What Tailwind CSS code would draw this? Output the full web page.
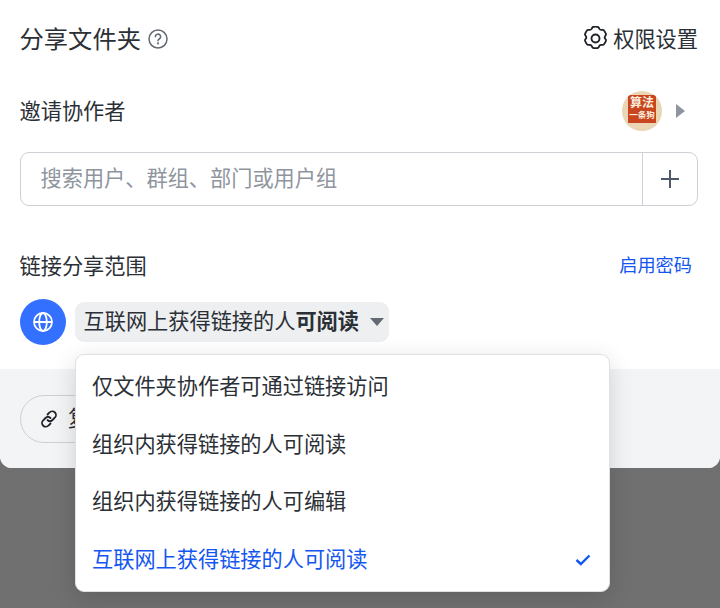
<!DOCTYPE html>
<html lang="zh-CN">
<head>
  <meta charset="UTF-8" />
  <title>分享文件夹</title>
  <script src="https://cdn.jsdelivr.net/npm/@tailwindcss/browser@4"></script>
</head>
<body class="bg-[#707070] text-[#2b2f36] font-['Inter','Noto_Sans_CJK_SC',sans-serif]">
  <div class="relative w-[720px] h-[608px] overflow-hidden">

    <!-- Card -->
    <div class="bg-white rounded-b-[12px] overflow-hidden w-[720px] h-[468px] flex flex-col">
      <div class="h-[369px] pl-[19.5px] pr-[22px] pt-[20.5px]">
        <!-- Header -->
        <div class="flex items-center justify-between h-9">
          <div class="flex items-center gap-[6px]">
            <h1 class="text-[24.3px] leading-9">分享文件夹</h1>
            <svg class="w-[22px] h-[22px] text-[#646a73]" viewBox="0 0 22 22" fill="none" stroke="currentColor" stroke-width="1.5" stroke-linecap="round">
              <circle cx="11" cy="11" r="9"/>
              <path d="M8.4 8.8a2.6 2.6 0 1 1 3.9 2.2c-.9.5-1.3 1-1.3 1.8"/>
              <circle cx="11" cy="15.4" r=".4" fill="currentColor"/>
            </svg>
          </div>
          <div class="flex items-center gap-[5px]">
            <svg class="w-[25px] h-[25px]" viewBox="2 2 20 20" fill="none" stroke="#1f2329" stroke-width="1.5" stroke-linejoin="round">
              <path d="M9.5 3.2a2 2 0 0 1 1-.6 6 6 0 0 1 3 0c.4.1.8.3 1 .6l.6 1.1c.3.5.9.8 1.5.8l1.2 0c.4 0 .8.2 1 .5a9 9 0 0 1 1.5 2.6c.1.4.1.8-.1 1.1l-.6 1c-.3.5-.3 1.1 0 1.6l.6 1c.2.3.2.7.1 1.1a9 9 0 0 1-1.5 2.6c-.2.3-.6.5-1 .5l-1.2 0c-.6 0-1.2.3-1.5.8l-.6 1.1c-.2.3-.6.5-1 .6a8 8 0 0 1-3 0c-.4-.1-.8-.3-1-.6l-.6-1.1c-.3-.5-.9-.8-1.5-.8l-1.2 0c-.4 0-.8-.2-1-.5a9 9 0 0 1-1.5-2.6c-.1-.4-.1-.8.1-1.1l.6-1c.3-.5.3-1.1 0-1.6l-.6-1c-.2-.3-.2-.7-.1-1.1a9 9 0 0 1 1.5-2.6c.2-.3.6-.5 1-.5l1.2 0c.6 0 1.2-.3 1.5-.8z"/>
              <circle cx="12" cy="12" r="3.2"/>
            </svg>
            <span class="text-[21.2px] leading-8">权限设置</span>
          </div>
        </div>

        <!-- Invite -->
        <div class="flex items-center justify-between mt-[34px] h-10">
          <span class="text-[21.2px] leading-8">邀请协作者</span>
          <div class="flex items-center gap-[14px] pr-[13px]">
            <div class="w-10 h-10 rounded-full bg-[#ead6b4] overflow-hidden flex items-center justify-center">
              <div class="w-[28px] h-[28px] bg-[#c8451f] text-[#fbeedd] text-[12px] leading-[15px] font-bold text-center mb-[3px] whitespace-nowrap overflow-hidden">
                <div>算法</div>
                <div class="text-[8.5px] leading-[11px]">一条狗</div>
              </div>
            </div>
            <div class="w-0 h-0 border-y-[7px] border-y-transparent border-l-[9px] border-l-[#8f959e]"></div>
          </div>
        </div>

        <!-- Search -->
        <div class="flex items-stretch mt-[21px] h-[54px] border-[1.5px] border-[#cdd0d5] rounded-[9px]">
          <div class="flex-1 flex items-center pl-5 text-[21.2px] text-[#8f959e]">搜索用户、群组、部门或用户组</div>
          <div class="w-[55px] border-l-[1.5px] border-[#cdd0d5] flex items-center justify-center">
            <svg class="w-6 h-6" viewBox="0 0 24 24" fill="none" stroke="#4e5969" stroke-width="2">
              <path d="M12 3v18M3 12h18"/>
            </svg>
          </div>
        </div>

        <!-- Link range -->
        <div class="flex items-center justify-between mt-[44px] h-8">
          <span class="text-[21.2px] leading-8">链接分享范围</span>
          <span class="text-[18.2px] text-[#1456f0] pr-[6px]">启用密码</span>
        </div>
        <div class="flex items-center gap-[9px] mt-[17px]">
          <div class="w-[46px] h-[46px] rounded-full bg-[#3370ff] flex items-center justify-center">
            <svg class="w-[20px] h-[20px]" viewBox="1 1 20 20" fill="none" stroke="white" stroke-width="1.8">
              <circle cx="11" cy="11" r="9"/>
              <ellipse cx="11" cy="11" rx="3.8" ry="9"/>
              <path d="M2 11h18"/>
            </svg>
          </div>
          <div class="flex items-center h-10 pl-[9px] pr-[4px] bg-[#eeeff0] rounded-[9px] text-[21.2px]">
            <span>互联网上获得链接的人<b class="font-bold">可阅读</b></span>
            <span class="ml-[11px] mr-[1px] w-0 h-0 border-x-[7px] border-x-transparent border-t-[8px] border-t-[#646a73]"></span>
          </div>
        </div>
      </div>

      <!-- Footer -->
      <div class="flex-1 bg-[#f3f4f6] px-5 pt-[26px]">
        <div class="flex items-center gap-[9px] w-[200px] h-[48px] pl-[18px] border-[1.5px] border-[#cdd0d5] rounded-full text-[21.2px]">
          <svg class="w-[20px] h-[20px]" viewBox="0 0 20 20" fill="none" stroke="#1f2329" stroke-width="1.8" stroke-linecap="round">
            <path d="M8.5 5.5l2-2a3.6 3.6 0 0 1 5.5 5l-2.5 2.5a3.6 3.6 0 0 1-5 0"/>
            <path d="M11.5 14.5l-2 2a3.6 3.6 0 0 1-5.5-5l2.5-2.5a3.6 3.6 0 0 1 5 0"/>
          </svg>
          <span>复制链接</span>
        </div>
      </div>
    </div>

    <!-- Dropdown -->
    <div class="absolute left-[74.5px] top-[353.5px] w-[535px] h-[238px] bg-white border border-[#dee0e3] rounded-[9px] shadow-[0_6px_24px_rgba(0,0,0,0.14)] py-1 text-[21.2px] text-[#2b2f36]">
      <div class="h-[57.5px] flex items-center px-[16.5px]">仅文件夹协作者可通过链接访问</div>
      <div class="h-[57.5px] flex items-center px-[16.5px]">组织内获得链接的人可阅读</div>
      <div class="h-[57.5px] flex items-center px-[16.5px]">组织内获得链接的人可编辑</div>
      <div class="h-[57.5px] flex items-center justify-between pl-[16.5px] pr-[18px] text-[#1456f0]">
        <span>互联网上获得链接的人可阅读</span>
        <svg class="w-[16px] h-[12px]" viewBox="0 0 16 12" fill="none" stroke="#1456f0" stroke-width="2.4">
          <path d="M1.5 6l4.3 4L14.5 1.5"/>
        </svg>
      </div>
    </div>
  </div>
</body>
</html>
